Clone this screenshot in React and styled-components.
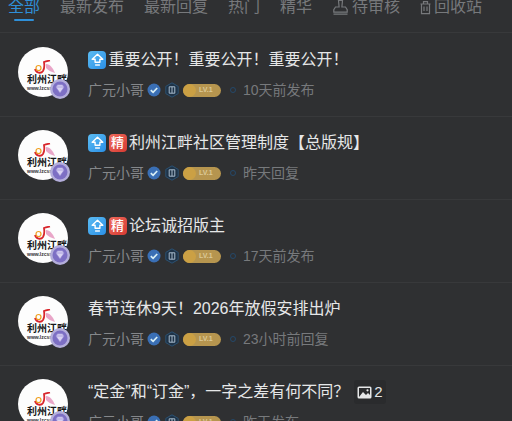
import React from 'react'
import styled, { createGlobalStyle } from 'styled-components'

const Global = createGlobalStyle`
  html, body {
    margin: 0;
    padding: 0;
    background: #2f3032;
    overflow: hidden;
  }
  body {
    font-family: "Liberation Sans", "Noto Sans CJK SC", sans-serif;
  }
`

const Page = styled.div`
  width: 512px;
  height: 421px;
  overflow: hidden;
  background: #2f3032;
`

const Tabs = styled.nav`
  display: flex;
  align-items: flex-start;
  height: 37px;
  margin-top: -5px;
  padding-left: 8px;
  gap: 20px;
  border-bottom: 1px solid #38393b;
`

const Tab = styled.div`
  position: relative;
  display: flex;
  align-items: center;
  gap: 3px;
  height: 26px;
  padding-bottom: 2px;
  box-sizing: border-box;
  font-size: 16px;
  line-height: 24px;
  color: ${p => (p.$active ? '#2f8fd8' : '#77797c')};
  &::after {
    content: '';
    display: ${p => (p.$active ? 'block' : 'none')};
    position: absolute;
    left: 6px;
    right: 6px;
    bottom: 0;
    height: 2px;
    border-radius: 1px;
    background: #2f8fd8;
  }
`

const Row = styled.article`
  display: flex;
  height: 83px;
  padding: 13px 0 0 18px;
  box-sizing: border-box;
  border-bottom: 1px solid #38393b;
  &:first-of-type { height: 84px; padding-top: 14px; }
`

const Avatar = styled.div`
  position: relative;
  flex: none;
  width: 50px;
  height: 50px;
  border-radius: 50%;
  background: #fdfdfd;
  margin-right: 20px;
`

const LogoText = styled.div`
  position: absolute;
  left: 9px;
  top: 27px;
  white-space: nowrap;
  font-size: 10px;
  line-height: 11px;
  font-weight: 700;
  color: #161616;
`

const LogoUrl = styled.div`
  position: absolute;
  left: 9px;
  top: 38px;
  white-space: nowrap;
  font-size: 5px;
  line-height: 6px;
  font-weight: 700;
  color: #333;
`

const LogoMark = styled.svg`
  position: absolute;
  left: 15px;
  top: 13px;
`

const RankBadge = styled.svg`
  position: absolute;
  right: -2px;
  bottom: -2px;
`

const Body = styled.div`
  display: flex;
  flex-direction: column;
  min-width: 0;
`

const Title = styled.div`
  display: flex;
  align-items: center;
  height: 24px;
  margin-top: 1px;
  font-size: 16px;
  line-height: 24px;
  color: #e6e7e8;
  white-space: nowrap;
`

const Tag = styled.span`
  display: inline-flex;
  align-items: center;
  justify-content: center;
  width: 18px;
  height: 18px;
  margin-right: 2.5px;
  border-radius: 4px;
  font-size: 13px;
  font-weight: 500;
  color: #fff;
  background: ${p => (p.$kind === 'top' ? 'linear-gradient(135deg, #5cbcf3, #2a8fe6)' : 'linear-gradient(135deg, #ef6a5c, #d63b33)')};
`

const ImageCount = styled.span`
  display: inline-flex;
  align-items: center;
  gap: 2px;
  margin-left: 5px;
  padding: 0 3px;
  border-radius: 3px;
  background: #2a2b2d;
  font-size: 15px;
  color: #e6e7e8;
`

const Meta = styled.div`
  display: flex;
  align-items: center;
  height: 20px;
  margin-top: 8px;
  font-size: 14px;
  line-height: 20px;
  color: #77797c;
  white-space: nowrap;
`

const Author = styled.span`
  color: #85878a;
  margin-right: 3px;
`

const Level = styled.span`
  position: relative;
  display: inline-flex;
  align-items: center;
  width: 38px;
  height: 13px;
  margin-left: 3px;
  padding-left: 16px;
  box-sizing: border-box;
  border-radius: 7px;
  background: #b6954f;
  font-size: 7px;
  font-weight: 700;
  color: #dcc997;
  &::before {
    content: '';
    position: absolute;
    left: 0;
    top: 0;
    width: 13px;
    height: 13px;
    border-radius: 50%;
    background: #cba044;
  }
`

const Dot = styled.span`
  display: inline-block;
  width: 4px;
  height: 4px;
  margin: 0 7px 0 9px;
  border: 1.5px solid #24486a;
  border-radius: 50%;
`

const ArrowIcon = () => (
  <svg width="13" height="14" viewBox="0 0 13 14" fill="none" stroke="#fff" strokeWidth="1.4" strokeLinejoin="round">
    <path d="M6.5 1.2 1.2 6.2h2.9v3h4.8v-3h2.9z" />
    <path d="M4.1 12h4.8" />
  </svg>
)

const VerifiedIcon = () => (
  <svg width="14" height="14" viewBox="0 0 14 14">
    <circle cx="7" cy="7" r="6.5" fill="#3a6fb5" />
    <path d="M3.8 7.2 6.1 9.4 10.2 5" fill="none" stroke="#d8eef5" strokeWidth="1.7" />
  </svg>
)

const BookBadge = () => (
  <svg width="16" height="16" viewBox="0 0 16 16" fill="none" style={{ marginLeft: 3 }}>
    <path d="M8 .8 14.2 4.4v7.2L8 15.2 1.8 11.6V4.4z" fill="#1f3347" stroke="#2c5273" />
    <path d="M5.2 4.8h5.6v6.4H5.2zM8 4.8v6.4" stroke="#a9bccd" strokeWidth="1" />
  </svg>
)

const GemBadge = () => (
  <RankBadge width="20" height="20" viewBox="0 0 20 20">
    <circle cx="10" cy="10" r="10" fill="#b4aedb" />
    <circle cx="10" cy="10" r="7.5" fill="#7d6fc4" />
    <path d="M5.8 8 7.6 5.8h4.8L14.2 8 10 14z" fill="#d9d3f3" stroke="#8f82d0" strokeWidth=".6" />
    <path d="M5.8 8h8.4" stroke="#8f82d0" strokeWidth=".6" />
  </RankBadge>
)

const ImageIcon = () => (
  <svg width="15" height="13" viewBox="0 0 15 13">
    <rect x=".5" y=".5" width="14" height="12" rx="1.5" fill="#e6e7e8" />
    <rect x="2" y="2" width="11" height="9" fill="#2a2b2d" />
    <path d="M2 11 6 6l3 3 2-2 2 2v2z" fill="#e6e7e8" />
    <circle cx="10.5" cy="4.3" r="1.1" fill="#e6e7e8" />
  </svg>
)

const StampIcon = () => (
  <svg width="17" height="16" viewBox="0 0 17 16" fill="none" stroke="#77797c" strokeWidth="1.2">
    <path d="M6.5 1.5h4L9.9 8h3.6l1.7 2.6v2.6H1.8v-2.6L3.5 8h3.6zM1.5 15.2h14" />
  </svg>
)

const TrashIcon = () => (
  <svg width="11" height="15" viewBox="0 0 11 15" fill="none" stroke="#77797c" strokeWidth="1.2">
    <path d="M.5 4h10M3.5 4V1.6h4V4M1.5 4v9.6h8V4" />
    <path d="M4 6.5v4.5M7 6.5v4.5" />
  </svg>
)

const tabs = [
  { label: '全部', active: true },
  { label: '最新发布' },
  { label: '最新回复' },
  { label: '热门' },
  { label: '精华' },
  { label: '待审核', icon: <StampIcon /> },
  { label: '回收站', icon: <TrashIcon /> },
]

const threads = [
  { tags: ['top'], title: '重要公开！重要公开！重要公开！', time: '10天前发布' },
  { tags: ['top', 'best'], title: '利州江畔社区管理制度【总版规】', time: '昨天回复' },
  { tags: ['top', 'best'], title: '论坛诚招版主', time: '17天前发布' },
  { tags: [], title: '春节连休9天！2026年放假安排出炉', time: '23小时前回复' },
  { tags: [], title: '“定金”和“订金”，一字之差有何不同？', time: '昨天发布', images: 2 },
]

const Thread = ({ tags, title, time, images }) => (
  <Row>
    <Avatar>
      <LogoMark width="24" height="15" viewBox="0 0 24 15" fill="none">
        <path d="M2 9c1 4 6 5 8 2 1.5-2.5 1.5-6 1-9 2.5-1 4-1 6-1.5" stroke="#d8262c" strokeWidth="1.8" />
        <path d="M13 4c4 0 7 4 9 9-4-1-7-3-9-5z" fill="#e9a6c8" />
        <circle cx="5.5" cy="8" r="2.5" stroke="#f0a020" strokeWidth="1.2" />
      </LogoMark>
      <LogoText>利州江畔</LogoText>
      <LogoUrl>www.lzcssq</LogoUrl>
      <GemBadge />
    </Avatar>
    <Body>
      <Title>
        {tags.map(t => (
          <Tag key={t} $kind={t}>{t === 'top' ? <ArrowIcon /> : '精'}</Tag>
        ))}
        {title}
        {images && (
          <ImageCount><ImageIcon />{images}</ImageCount>
        )}
      </Title>
      <Meta>
        <Author>广元小哥</Author>
        <VerifiedIcon />
        <BookBadge />
        <Level>LV.1</Level>
        <Dot />
        {time}
      </Meta>
    </Body>
  </Row>
)

const App = () => (
  <Page>
    <Global />
    <Tabs>
      {tabs.map(t => (
        <Tab key={t.label} $active={t.active}>{t.icon}{t.label}</Tab>
      ))}
    </Tabs>
    {threads.map(t => <Thread key={t.title} {...t} />)}
  </Page>
)

export default App
